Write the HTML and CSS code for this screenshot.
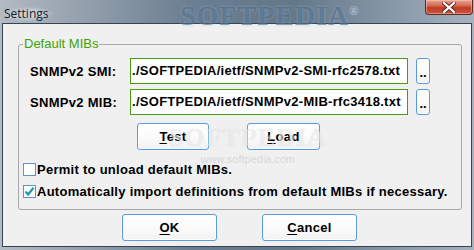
FILE: index.html
```html
<!DOCTYPE html>
<html>
<head>
  <link rel="stylesheet" href="styles.css">
</head>
<body>
  <div class="window">
    <div class="titlebar">
      <span class="title">Settings</span>
      <span class="brand">SOFTPEDIA<sup>®</sup></span>
      <button class="close">
        <svg width="14" height="11" viewBox="0 0 14 11">
          <path d="M2 1 L12 10 M12 1 L2 10" stroke="#5a2a22" stroke-width="4" stroke-linecap="square"/>
          <path d="M2 1 L12 10 M12 1 L2 10" stroke="#fff" stroke-width="2.2" stroke-linecap="square"/>
        </svg>
      </button>
    </div>

    <div class="client">
      <fieldset class="group">
        <legend>Default MIBs</legend>

        <div class="file-row">
          <span class="file-label">SNMPv2 SMI:</span>
          <div class="file-input">./SOFTPEDIA/ietf/SNMPv2-SMI-rfc2578.txt</div>
          <button class="btn browse">..</button>
        </div>
        <div class="file-row">
          <span class="file-label">SNMPv2 MIB:</span>
          <div class="file-input">./SOFTPEDIA/ietf/SNMPv2-MIB-rfc3418.txt</div>
          <button class="btn browse">..</button>
        </div>

        <div class="actions">
          <button class="btn"><u>T</u>est</button>
          <button class="btn"><u>L</u>oad</button>
        </div>

        <div class="check">
          <span class="box"></span>Permit to unload default MIBs.
        </div>
        <div class="check">
          <span class="box">
            <svg width="11" height="11" viewBox="0 0 11 11">
              <path d="M1.5 5.5 L4.2 8.5 L9.5 1.8" fill="none" stroke="#1e9aa8" stroke-width="2.2"/>
            </svg>
          </span>Automatically import definitions from default MIBs if necessary.
        </div>

        <div class="watermark">
          <span class="wm-big">SOFTPEDIA</span>
          <span class="wm-small">www.softpedia.com</span>
        </div>
      </fieldset>

      <div class="footer">
        <button class="btn wide"><u>O</u>K</button>
        <button class="btn wide"><u>C</u>ancel</button>
      </div>
    </div>
  </div>
</body>
</html>
```

FILE: styles.css
```css
* {
  margin: 0;
  padding: 0;
  box-sizing: border-box;
}

body {
  width: 474px;
  height: 250px;
  overflow: hidden;
  font-family: "Liberation Sans", Arial, sans-serif;
}

.window {
  width: 474px;
  height: 250px;
  display: flex;
  flex-direction: column;
  background: linear-gradient(to right, #b3bbc3 0, #939fac 18%, #6b7e91 40%, #647889 62%, #8294a4 80%, #a6b2be 100%);
}

.titlebar {
  height: 23px;
  position: relative;
  display: flex;
  align-items: flex-start;
  justify-content: space-between;
}

.title {
  margin: 7px 0 0 4px;
  padding: 0 4px 0 0;
  font-family: "Open Sans", "Noto Sans", sans-serif;
  font-size: 12px;
  line-height: 14px;
  color: #15202b;
  background: radial-gradient(ellipse at center, rgba(210, 216, 222, 0.8) 30%, rgba(210, 216, 222, 0) 75%);
}

.brand {
  position: absolute;
  left: 180px;
  top: -3px;
  font-family: "Liberation Serif", serif;
  font-weight: bold;
  font-size: 28px;
  line-height: 28px;
  letter-spacing: 1px;
  color: rgba(60, 90, 120, 0.5);
  text-shadow: 0 0 3px rgba(160, 185, 205, 0.6);
}

.brand sup {
  font-size: 12px;
  color: rgba(200, 210, 220, 0.6);
}

.close {
  width: 48px;
  height: 15px;
  margin-right: 1px;
  border: 1px solid #5e2a22;
  border-top: none;
  border-radius: 0 0 4px 4px;
  background: linear-gradient(#e9a696 0, #d46a55 40%, #c13c25 55%, #c8553c 100%);
  box-shadow: inset 0 0 0 1px rgba(255, 200, 190, 0.5);
  display: flex;
  align-items: center;
  justify-content: center;
}

.client {
  flex: 1;
  margin: 0 2px 3px 2px;
  border: 1px solid #344454;
  background: #f0f0f0;
  padding: 13px 0 0 15px;
}

.group {
  position: relative;
  width: 444px;
  border: 1px solid #a8a8a8;
  border-radius: 3px;
  padding: 7px 0 9px 4px;
}

.group legend {
  margin-left: 0;
  padding: 0 1px;
  font-size: 13px;
  line-height: 14px;
  color: #3fa300;
}

.file-row {
  display: flex;
  align-items: center;
  margin-left: 7px;
  height: 26px;
}

.file-row + .file-row {
  margin-top: 5px;
}

.file-label {
  width: 100px;
  font-size: 13px;
  font-weight: bold;
  letter-spacing: 0.3px;
  color: #000;
}

.file-input {
  width: 278px;
  height: 26px;
  padding-left: 1px;
  border: 1px solid #479b0c;
  background: #fff;
  font-size: 13px;
  font-weight: bold;
  letter-spacing: 0.28px;
  line-height: 24px;
  white-space: nowrap;
  overflow: hidden;
}

.btn {
  font-family: "Liberation Sans", Arial, sans-serif;
  font-size: 13px;
  font-weight: bold;
  letter-spacing: 0.3px;
  color: #000;
  border: 1px solid #5a9be0;
  border-radius: 3px;
  background: linear-gradient(#ffffff 0, #fbfbfb 50%, #f2f2f2 100%);
  box-shadow: inset 0 0 0 1px #fff;
}

.btn u {
  text-underline-offset: 2px;
}

.browse {
  width: 14px;
  height: 26px;
  margin-left: 8px;
  padding-top: 3px;
  line-height: 14px;
  letter-spacing: 0;
}

.actions {
  display: flex;
  gap: 38px;
  margin: 8px 0 0 114px;
}

.actions .btn {
  width: 72px;
  height: 27px;
}

.actions .btn + .btn {
  width: 73px;
}

.check {
  display: flex;
  align-items: center;
  height: 18px;
  font-size: 13px;
  font-weight: bold;
  letter-spacing: 0.27px;
  color: #000;
}

.actions + .check {
  margin-top: 10px;
}

.check + .check {
  margin-top: 4px;
}

.box {
  width: 13px;
  height: 13px;
  margin-right: 1px;
  border: 1px solid #5d95d2;
  background: #fff;
  display: flex;
  align-items: center;
  justify-content: center;
}

.watermark {
  position: absolute;
  left: 150px;
  top: 72px;
  display: flex;
  flex-direction: column;
  align-items: center;
  pointer-events: none;
}

.wm-big {
  font-family: "Liberation Serif", serif;
  font-weight: bold;
  font-size: 26px;
  letter-spacing: 1px;
  color: rgba(255, 255, 255, 0.5);
  text-shadow: 0 0 1px rgba(150, 150, 150, 0.3);
}

.wm-small {
  font-family: "Liberation Sans Narrow", "Liberation Sans", sans-serif;
  font-size: 11px;
  color: rgba(190, 190, 190, 0.5);
}

.footer {
  display: flex;
  gap: 45px;
  margin: 4px 0 0 104px;
}

.wide {
  width: 95px;
  height: 27px;
}
```
